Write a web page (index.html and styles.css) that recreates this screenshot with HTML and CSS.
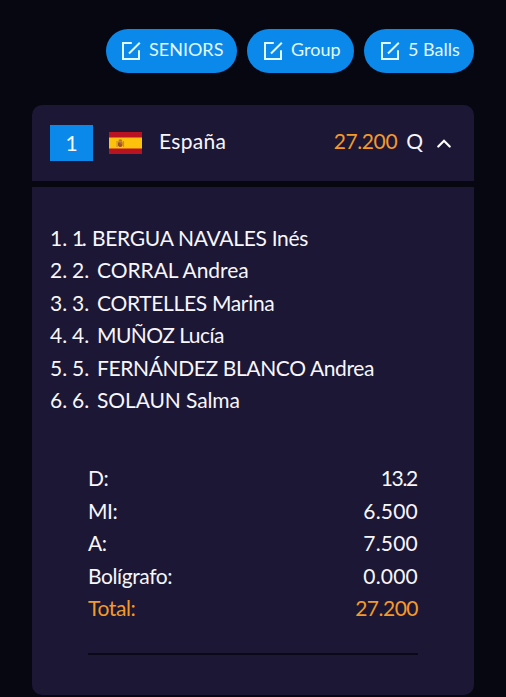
FILE: index.html
```html
<!DOCTYPE html>
<html lang="es">
<head>
  <meta charset="UTF-8">
  <meta name="viewport" content="width=device-width, initial-scale=1.0">
  <title>España - 5 Balls</title>
  <link rel="stylesheet" href="styles.css">
</head>
<body>

<svg class="symbols" width="0" height="0">
  <symbol id="edit" viewBox="0 0 20 20">
    <path d="M10.8 2H2v16h16V9.3M8 12.5L18.8 1.7" />
  </symbol>
</svg>

<div class="filters">
  <button class="filter seniors"><svg class="icon"><use href="#edit" /></svg><span>SENIORS</span></button>
  <button class="filter group"><svg class="icon"><use href="#edit" /></svg><span>Group</span></button>
  <button class="filter balls"><svg class="icon"><use href="#edit" /></svg><span>5 Balls</span></button>
</div>

<div class="card">
  <div class="card-header">
    <span class="position">1</span>
    <svg class="flag" viewBox="0 0 33 22">
      <rect width="33" height="22" fill="#b91220" />
      <rect y="5.5" width="33" height="11" fill="#fdc20b" />
      <path d="M7.5 9h1.2v6H7.5zM14 9h1.1v6H14z" fill="#c88a48" />
      <path d="M9 10.2h4.5v3.6q-2.2 2.6-4.5 0z" fill="#a34f28" />
      <path d="M9.2 9.8l.6-2q1.5-.9 3 0l.6 2z" fill="#b57434" />
      <path d="M11.5 10.5h1.5v1.8h-1.5z" fill="#8c7b73" />
    </svg>
    <span class="country">España</span>
    <span class="score">27.200</span>
    <span class="qualified">Q</span>
    <svg class="arrow" viewBox="0 0 14 9"><path d="M1.3 7.5L7 1.8l5.7 5.7" /></svg>
  </div>

  <div class="card-body">
    <ol class="gymnasts">
      <li><span class="rank">1.</span><span class="number one">1.</span><span class="name bergua">BERGUA NAVALES Inés</span></li>
      <li><span class="rank">2.</span><span class="number">2.</span><span class="name corral">CORRAL Andrea</span></li>
      <li><span class="rank">3.</span><span class="number">3.</span><span class="name cortelles">CORTELLES Marina</span></li>
      <li><span class="rank">4.</span><span class="number">4.</span><span class="name munoz">MUÑOZ Lucía</span></li>
      <li><span class="rank">5.</span><span class="number">5.</span><span class="name fernandez">FERNÁNDEZ BLANCO Andrea</span></li>
      <li><span class="rank">6.</span><span class="number">6.</span><span class="name solaun">SOLAUN Salma</span></li>
    </ol>

    <div class="scores">
      <div class="row difficulty"><span class="label">D:</span><span class="value">13.2</span></div>
      <div class="row"><span class="label">MI:</span><span class="value">6.500</span></div>
      <div class="row"><span class="label">A:</span><span class="value">7.500</span></div>
      <div class="row"><span class="label">Bolígrafo:</span><span class="value">0.000</span></div>
      <div class="row total"><span class="label">Total:</span><span class="value">27.200</span></div>
    </div>
  </div>
</div>

</body>
</html>
```

FILE: styles.css
```css
* {
  box-sizing: border-box;
}

body {
  margin: 0;
  padding: 29px 32px 0;
  height: 697px;
  overflow: hidden;
  background-color: #070711;
  color: #f7f6fb;
  font-family: Lato, "Liberation Sans", sans-serif;
  font-size: 21px;
}

.symbols {
  position: absolute;
}

.filters {
  display: flex;
  justify-content: flex-end;
  gap: 10px;
}

.filter {
  display: flex;
  align-items: center;
  height: 44px;
  padding: 0 0 4px 15px;
  border: none;
  border-radius: 22px;
  background-color: #0b89ea;
  color: #e0f8ff;
  font-family: inherit;
  font-size: 18px;
  white-space: nowrap;
}

.seniors {
  width: 131px;
  letter-spacing: 0;
}

.group {
  width: 107px;
}

.balls {
  width: 110px;
}

.group .icon,
.balls .icon {
  margin-left: 1px;
}

.icon {
  width: 20px;
  height: 20px;
  margin: 4px 8px 0 0;
  fill: none;
  stroke: #e0f8ff;
  stroke-width: 2;
}

.card {
  margin-top: 32px;
  width: 442px;
}

.card-header {
  display: flex;
  align-items: center;
  height: 76px;
  padding: 0 23px 0 18px;
  border-radius: 10px 10px 0 0;
  background-color: #1b1735;
}

.position {
  width: 43px;
  height: 36px;
  line-height: 36px;
  background-color: #0b89ea;
  text-align: center;
}

.flag {
  width: 33px;
  height: 22px;
  margin-left: 16px;
}

.country {
  margin: -5px 0 0 17px;
  letter-spacing: 0.3px;
}

.score {
  margin: -5px 9px 0 auto;
  color: #f39a2b;
  letter-spacing: -0.4px;
}

.qualified {
  margin: -5px 14px 0 0;
}

.arrow {
  width: 14px;
  height: 9px;
  fill: none;
  stroke: #fff;
  stroke-width: 2.2;
  stroke-linecap: round;
}

.card-body {
  height: 508px;
  margin-top: 6px;
  padding: 35px 56px 0 18px;
  border-radius: 0 0 10px 10px;
  background-color: #1b1735;
  line-height: 32.4px;
}

.gymnasts {
  margin: 0;
  padding: 0;
  list-style: none;
}

.gymnasts li {
  display: flex;
  white-space: nowrap;
}

.rank {
  width: 22px;
}

.number {
  width: 25px;
}

.one {
  width: 20px;
  letter-spacing: -2.5px;
}

.bergua {
  letter-spacing: -0.3px;
}

.corral {
  letter-spacing: -0.05px;
}

.cortelles {
  letter-spacing: -0.33px;
}

.munoz {
  letter-spacing: -0.55px;
}

.fernandez {
  letter-spacing: -0.38px;
}

.solaun {
  letter-spacing: -0.1px;
}

.scores {
  margin: 46px 0 0 38px;
  padding-bottom: 29px;
  border-bottom: 2px solid #0b0917;
}

.row {
  display: flex;
  justify-content: space-between;
}

.label {
  letter-spacing: -0.4px;
}

.value {
  letter-spacing: 0.2px;
}

.difficulty .value {
  letter-spacing: -1.3px;
  margin-right: 1px;
}

.total {
  color: #f39a2b;
}

.total .value {
  letter-spacing: -0.5px;
}
```
